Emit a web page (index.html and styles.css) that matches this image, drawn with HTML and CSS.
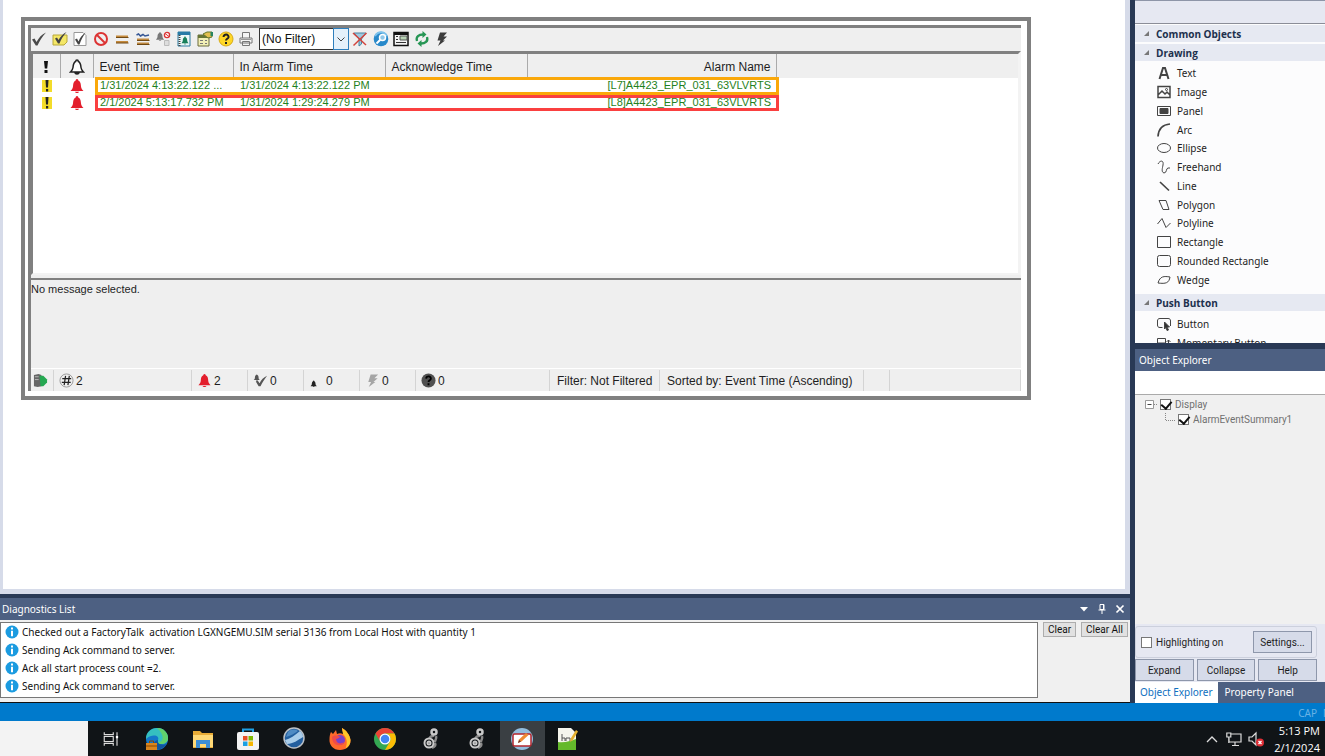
FILE: index.html
```html
<!DOCTYPE html>
<html lang="en">
<head>
    <meta charset="UTF-8">
    <meta name="viewport" content="width=device-width, initial-scale=1.0">
    <title>Alarm Event Summary</title>
    <link rel="stylesheet" href="styles.css">
</head>
<body>
    <svg class="defs" aria-hidden="true">
        <symbol id="bell" viewBox="0 0 16 16">
            <path d="M8 1c-1 0-1.300.8-1.300 1.500C4.300 3.500 4.200 6 4 8.500 3.800 10.500 2.800 11.500 1.500 13h13C13.200 11.500 12.200 10.500 12 8.500 11.800 6 11.700 3.500 9.300 2.500 9.300 1.800 9 1 8 1zM6 13.800h4c-.3 1.600-3.700 1.600-4 0z"/>
        </symbol>
        <symbol id="warn" viewBox="0 0 12 16">
            <path d="M1 2h10v12H1z" fill="#f3dc2a"/>
            <path d="M4.500 2h3L7 9.500H5zM5 11h2.200v2.500H5z" fill="#222"/>
        </symbol>
        <symbol id="info" viewBox="0 0 14 14">
            <circle cx="7" cy="7" r="6.500" fill="#1b9be0"/>
            <path d="M6 2.600h2v1.900H6zM6 5.700h2v5.600H6z" fill="#fff"/>
        </symbol>
        <symbol id="gears" viewBox="0 0 24 24">
            <g fill="none" stroke="#c9c9c9">
                <path d="M15 8.500c-3 1-5 1.500-4 3M17 9c1 3-.5 4-1.500 6M16 16c1 2-1 4-3 5" stroke="#8a8a8a" stroke-width="2.500"/>
                <circle cx="10" cy="16" r="4.500" stroke-width="2"/>
                <circle cx="10" cy="16" r="1.500" stroke-width="2"/>
                <circle cx="15" cy="5" r="2.500" stroke-width="2.500"/>
            </g>
        </symbol>
    </svg>

    <div class="workspace">
        <main class="editor">
            <div class="canvas">
                <section class="alarm">
                    <div class="alarm-inner">
                        <div class="toolbar">
                            <div class="tools">
                                <button aria-label="Acknowledge"><svg viewBox="0 0 16 16"><path d="M1 8.500l2.500-1 2 3.500C8 6.500 10.500 3.500 15 1.500 11 6 8.500 10 6.500 14.500H4.800z" fill="#4a4a4a"/></svg></button>
                                <button aria-label="Acknowledge with comment"><svg viewBox="0 0 16 16"><path d="M1 4h14v7l-3 3H1z" fill="#f4e767" stroke="#b7a83b"/><path d="M3 7.500l2-1 1.500 2.500C8.500 5.500 11 3 14.500 1 11 5 9 8.500 7.500 12.500H6z" fill="#444"/></svg></button>
                                <button aria-label="Acknowledge page"><svg viewBox="0 0 16 16"><path d="M2 1.500h9l3 3v10H2z" fill="#fff" stroke="#999"/><path d="M3 8.500l2-1 1.500 3C8 6.500 10 4 13.500 1.500 11 5.500 9 9 7.500 13.500H6z" fill="#444"/></svg></button>
                                <button aria-label="Suppress"><svg viewBox="0 0 16 16"><circle cx="8" cy="8" r="6" fill="none" stroke="#dc3434" stroke-width="2"/><path d="M4 4l8 8" stroke="#dc3434" stroke-width="2"/></svg></button>
                                <button aria-label="Shelve"><svg viewBox="0 0 16 16"><path d="M2 5.500h12M2 11h12" stroke="#c48a3c" stroke-width="2"/><path d="M2 6.500h12.500M2 12h12.500" stroke="#704914"/></svg></button>
                                <button aria-label="Unshelve"><svg viewBox="0 0 16 16"><path d="M2 8.500h12M2 12.500h12" stroke="#bd873e" stroke-width="2"/><path d="M2 9.500h12.500M2 13.500h12.500" stroke="#704914"/><path d="M1.500 4l2-1L5.500 5 8 3.500l2 1.500 4-1" fill="none" stroke="#365795" stroke-width="1.500"/></svg></button>
                                <button aria-label="Disable alarm"><svg viewBox="0 0 16 16"><use href="#bell" x="0" y="0" width="10" height="11" fill="#777"/><circle cx="12" cy="4" r="2.600" fill="#fff" stroke="#d33" stroke-width="1.300"/><path d="M10 2.500l4 3" stroke="#d33"/><path d="M9.500 9.500H14v5H9.500z" fill="#ddd" stroke="#bbb"/></svg></button>
                                <button aria-label="Alarm display"><svg viewBox="0 0 16 16"><path d="M2 1h12v14H2z" fill="#edf7f8" stroke="#2b7ba0"/><path d="M2 1h12v3H2z" fill="#287ba7"/><path d="M3.500 4v11" stroke="#444" stroke-width="2" stroke-dasharray="1 1"/><use href="#bell" x="4.500" y="4.500" width="9" height="10" fill="#18805b"/></svg></button>
                                <button aria-label="Properties"><svg viewBox="0 0 16 16"><path d="M1 4h11v11H1z" fill="#f2efb6" stroke="#6a6a3a"/><path d="M1 4h11v3H1z" fill="#667536"/><path d="M3 9.500h3M3 12.500h3M8 9.500h2M8 12.500h2" stroke="#777"/><path d="M6 3l4-2h5v5l-4 1z" fill="#e3bf4e" stroke="#66782b"/><path d="M13.500 1H16v4h-2.500z" fill="#278563"/></svg></button>
                                <button aria-label="Help"><svg viewBox="0 0 16 16"><circle cx="8" cy="8" r="7" fill="#ffd726" stroke="#d6aa18"/><path d="M5.500 6c.2-3.500 5.500-3 5 .2C10.200 7.700 8 8 8 9.500M8 11v2" fill="none" stroke="#222" stroke-width="2"/></svg></button>
                                <button aria-label="Print"><svg viewBox="0 0 16 16"><path d="M4.500 7V1.500h7V7M2 7h12v5H2zM4.500 10.500h7v4h-7z" fill="#f5f5f5" stroke="#777"/><path d="M3 8.500h10" stroke="#999"/></svg></button>
                            </div>
                            <div class="filter">
                                <select aria-label="Filter"><option>(No Filter)</option></select>
                                <svg viewBox="0 0 14 20" aria-hidden="true"><path d="M3.500 8.500L7 12l3.500-3.500" fill="none" stroke="#444"/></svg>
                            </div>
                            <div class="tools tools-end">
                                <button aria-label="Clear filter"><svg viewBox="0 0 16 16"><path d="M2 2h12L9.500 8v5L7 15V8z" fill="#9cc9df" stroke="#4884a2"/><path d="M1 2l13 12M14.500 2L1.500 14.500" stroke="#d2443c" stroke-width="1.500"/></svg></button>
                                <button aria-label="Search"><svg viewBox="0 0 16 16"><circle cx="8" cy="8" r="7.300" fill="#2889ca"/><path d="M2 5c3-5 9-5 12 0" fill="none" stroke="#7dc2ec" stroke-width="2"/><circle cx="9.500" cy="6.500" r="3" fill="#8fc7e9" stroke="#fff" stroke-width="1.500"/><path d="M7.300 8.700L3.500 12.500" stroke="#fff" stroke-width="2"/></svg></button>
                                <button aria-label="Details"><svg viewBox="0 0 16 16"><path d="M1 1.500h14v13H1z" fill="#f5f5f5" stroke="#111" stroke-width="1.500"/><path d="M1 3h14" stroke="#111" stroke-width="2"/><path d="M3 5.500h2M3 8.500h2M3 11.500h10" stroke="#333"/><path d="M7 5h7v4H7z" fill="#b8d3b4" stroke="#555"/></svg></button>
                                <button aria-label="Refresh"><svg viewBox="0 0 16 16"><path d="M3 10C1.500 5.500 5 3.500 9 3.500M13 6c1.500 4.500-2 6.500-6 6.500" fill="none" stroke="#269654" stroke-width="2.300"/><path d="M8.500 0l4 3.500-4 3.500zM7.500 9l-4 3.500 4 3.500z" fill="#269654"/></svg></button>
                                <button aria-label="Run"><svg viewBox="0 0 16 16"><path d="M6 1.500h7L9.500 5.500h3.500L9 9.500h2L4 15l2.500-5.500H3.500z" fill="#3c3c3c"/></svg></button>
                            </div>
                        </div>

                        <div class="alarm-list">
                            <table>
                                <colgroup>
                                    <col class="c-priority"><col class="c-state"><col class="c-event"><col class="c-in"><col class="c-ack"><col class="c-name"><col>
                                </colgroup>
                                <thead>
                                    <tr>
                                        <th><svg viewBox="0 0 12 16" role="img" aria-label="Priority"><path d="M4 2h4l-.8 7.500H4.800zM4.500 11h3v3h-3z" fill="#111"/></svg></th>
                                        <th><svg viewBox="0 0 16 16" role="img" aria-label="State"><use href="#bell" fill="#fff" stroke="#222" stroke-width="1.500"/></svg></th>
                                        <th>Event Time</th>
                                        <th>In Alarm Time</th>
                                        <th>Acknowledge Time</th>
                                        <th class="right">Alarm Name</th>
                                        <th></th>
                                    </tr>
                                </thead>
                                <tbody>
                                    <tr>
                                        <td><svg viewBox="0 0 12 16"><use href="#warn"/></svg></td>
                                        <td><svg viewBox="0 0 16 16"><use href="#bell" fill="#e31e2c"/></svg></td>
                                        <td>1/31/2024 4:13:22.122 ...</td>
                                        <td>1/31/2024 4:13:22.122 PM</td>
                                        <td></td>
                                        <td class="right">[L7]A4423_EPR_031_63VLVRTS</td>
                                        <td></td>
                                    </tr>
                                    <tr>
                                        <td><svg viewBox="0 0 12 16"><use href="#warn"/></svg></td>
                                        <td><svg viewBox="0 0 16 16"><use href="#bell" fill="#e31e2c"/></svg></td>
                                        <td>2/1/2024 5:13:17.732 PM</td>
                                        <td>1/31/2024 1:29:24.279 PM</td>
                                        <td></td>
                                        <td class="right">[L8]A4423_EPR_031_63VLVRTS</td>
                                        <td></td>
                                    </tr>
                                </tbody>
                            </table>
                            <div class="marks">
                                <div class="mark mark-orange"></div>
                                <div class="mark mark-red"></div>
                            </div>
                        </div>

                        <div class="message">No message selected.</div>

                        <div class="alarm-status">
                            <span class="s-conn"><svg viewBox="0 0 16 16"><path d="M1 2l5-1 3 1v12l-4 1-4-1z" fill="#666"/><path d="M2 4h4M2 7h4" stroke="#bbb"/><path d="M7 3h4l4 4v3l-4 4H8z" fill="#26a852"/></svg></span>
                            <span class="s-total"><svg viewBox="0 0 16 16"><circle cx="8" cy="8" r="7" fill="#eee" stroke="#999"/><path d="M7 3L5.500 13M11 3L9.500 13M3.500 6h9.500M3 10h9.500" stroke="#222" stroke-width="1.300"/></svg>2</span>
                            <span><svg viewBox="0 0 16 16"><use href="#bell" fill="#e31e2c"/></svg>2</span>
                            <span><svg viewBox="0 0 16 16"><use href="#bell" width="8" height="10" fill="#555"/><path d="M3 9l2-1 2 3c2-4 4-6 8-8-3 4-5 7-7 11H6z" fill="#555"/></svg>0</span>
                            <span><svg viewBox="0 0 16 16"><use href="#bell" x="1" y="7" width="8" height="9" fill="#222"/></svg>0</span>
                            <span><svg viewBox="0 0 16 16"><path d="M6 1.500h8L10 5.500h3.500L9 9.500h2L4 15l2.500-5.500H3.500z" fill="#a5a5a5"/></svg>0</span>
                            <span class="s-unknown"><svg viewBox="0 0 16 16"><circle cx="8" cy="8" r="7.500" fill="#505050"/><path d="M5.500 6c.2-3.500 5.500-3 5 .2C10.200 7.700 8 8 8 9.500M8 11v2" fill="none" stroke="#000" stroke-width="2"/></svg>0</span>
                            <span class="s-filter">Filter: Not Filtered</span>
                            <span class="s-sort">Sorted by: Event Time (Ascending)</span>
                            <span class="s-blank"></span>
                            <span class="s-rest"></span>
                        </div>
                    </div>
                </section>
            </div>

            <section class="diagnostics">
                <header class="panel-title">
                    <h2>Diagnostics List</h2>
                    <button aria-label="Window position"><svg viewBox="0 0 12 12"><path d="M2 4h8L6 8.500z" fill="#fff"/></svg></button>
                    <button aria-label="Auto hide"><svg viewBox="0 0 12 12"><path d="M4 1.500h4v5H4zM2.500 7h7M6 7v4M7.500 2v5" fill="none" stroke="#fff"/></svg></button>
                    <button aria-label="Close"><svg viewBox="0 0 12 12"><path d="M2.500 2.500l7 7M9.500 2.500l-7 7" stroke="#fff" stroke-width="1.700"/></svg></button>
                </header>
                <div class="diagnostics-body">
                    <ul>
                        <li><svg><use href="#info"/></svg>Checked out a FactoryTalk&nbsp; activation LGXNGEMU.SIM serial 3136 from Local Host with quantity 1</li>
                        <li><svg><use href="#info"/></svg>Sending Ack command to server.</li>
                        <li><svg><use href="#info"/></svg>Ack all start process count =2.</li>
                        <li><svg><use href="#info"/></svg>Sending Ack command to server.</li>
                        <li><svg><use href="#info"/></svg></li>
                    </ul>
                    <div class="diagnostics-actions">
                        <button>Clear</button>
                        <button>Clear All</button>
                    </div>
                </div>
            </section>
        </main>

        <aside class="side">
            <section class="toolbox">
                <div class="toolbox-top"></div>
                <h3><svg viewBox="0 0 6 6"><path d="M6 0v6H0z"/></svg>Common Objects</h3>
                <h3><svg viewBox="0 0 6 6"><path d="M6 0v6H0z"/></svg>Drawing</h3>
                <ul class="drawing">
                    <li><svg viewBox="0 0 16 16"><path d="M3.500 14L7 3h2l3.500 11M5 10h6" stroke-width="2"/></svg>Text</li>
                    <li><svg viewBox="0 0 16 16"><path d="M2 2.500h12v11H2zM2 11l4-4 3 3 2-2 3 3" stroke-width="1.500"/><circle cx="10.500" cy="5.500" r="1"/></svg>Image</li>
                    <li><svg viewBox="0 0 16 16"><path d="M1.500 3.500h13v9h-13z"/><path d="M4 5.500h8v5H4z" fill="#444"/></svg>Panel</li>
                    <li><svg viewBox="0 0 16 16"><path d="M2 14.500C2.500 7 7 2.500 14 2" stroke-width="1.700"/></svg>Arc</li>
                    <li><svg viewBox="0 0 16 16"><ellipse cx="8" cy="8" rx="6.500" ry="4.500"/></svg>Ellipse</li>
                    <li><svg viewBox="0 0 16 16"><path d="M2 5C4 1 8 1 7 6c-.5 3-2 7 1 8 3 0 2-5 4-5h2"/></svg>Freehand</li>
                    <li><svg viewBox="0 0 16 16"><path d="M4 4l9 8.500" stroke-width="1.700"/></svg>Line</li>
                    <li><svg viewBox="0 0 16 16"><path d="M3 3.500h7l3 9H7z"/></svg>Polygon</li>
                    <li><svg viewBox="0 0 16 16"><path d="M1.500 9L6 3.500l4 9L14.500 8"/></svg>Polyline</li>
                    <li><svg viewBox="0 0 16 16"><path d="M1.500 2.500h13v11h-13z"/></svg>Rectangle</li>
                    <li><svg viewBox="0 0 16 16"><rect x="1.500" y="2.500" width="13" height="11" rx="2"/></svg>Rounded Rectangle</li>
                    <li><svg viewBox="0 0 16 16"><path d="M2 11c2-7 6-7 12-6-1 6-4 7-12 6z"/></svg>Wedge</li>
                </ul>
                <h3><svg viewBox="0 0 6 6"><path d="M6 0v6H0z"/></svg>Push Button</h3>
                <ul class="buttons">
                    <li><svg viewBox="0 0 16 16"><path d="M6.500 11.500H4c-2 0-2.500-1-2.500-2.500V5c0-1.500.5-2.500 2.500-2.500h8c2 0 2.500 1 2.500 2.500v5"/><path d="M8.500 6l5 5h-2.500l1.500 3-1.500.5-1-3-1.500 1.500z" fill="#333"/></svg>Button</li>
                    <li><svg viewBox="0 0 16 16"><path d="M1.500 3.500h8v9h-8zM1.500 8h8M12.500 5v8M10.500 7l2-2 2 2"/></svg>Momentary Button</li>
                </ul>
            </section>

            <section class="explorer">
                <header class="panel-title"><h2>Object Explorer</h2></header>
                <input class="search" type="text" aria-label="Search objects">
                <div class="tree">
                    <div class="node">
                        <svg class="expander" viewBox="0 0 12 10" aria-hidden="true"><path d="M.5.5h8v8h-8z" fill="#fff" stroke="#999"/><path d="M2.500 4.500h4" stroke="#444"/><path d="M9 4.500h3" stroke="#888" stroke-dasharray="1 1"/></svg>
                        <label><input type="checkbox" checked>Display</label>
                    </div>
                    <div class="node child">
                        <svg class="branch" viewBox="0 0 10 14" aria-hidden="true"><path d="M.5 0v7.500H10" fill="none" stroke="#888" stroke-dasharray="1 1"/></svg>
                        <label><input type="checkbox" checked>AlarmEventSummary1</label>
                    </div>
                </div>
                <div class="highlighting">
                    <label><input type="checkbox">Highlighting on</label>
                    <button>Settings...</button>
                </div>
                <div class="explorer-actions">
                    <button>Expand</button>
                    <button>Collapse</button>
                    <button>Help</button>
                </div>
                <nav class="tabs">
                    <a class="active" href="#">Object Explorer</a>
                    <a href="#">Property Panel</a>
                </nav>
            </section>
        </aside>
    </div>

    <div class="statusbar"><span>CAP</span><span class="num">NUM</span></div>

    <footer class="taskbar">
        <div class="taskbar-search"></div>
        <button class="task-view" aria-label="Task view"><svg viewBox="0 0 24 24"><path d="M3 8.500h12v7H3zM3 3v3h12V3M3 21v-3h12v3M20 3v18" fill="none" stroke="#ddd" stroke-width="1.500"/><path d="M18.500 8h3v3h-3z" fill="#fff"/></svg></button>
        <div class="apps">
            <button aria-label="Edge"><svg viewBox="0 0 24 24"><circle cx="12" cy="12" r="11" fill="#1477c9"/><path d="M1 12C1 5 6 1 12 1c7 0 11 5 11 10 0 4-3 6-7 6-3 0-4-2-3-4 2-4-5-7-12-1z" fill="#35bfc0"/><path d="M12 1c7 0 11 5 11 10 0 4-3 6-7 6-2 0-3-.5-3.300-1.500C20 15 19 7 12 1z" fill="#61d16d"/><path d="M13 13c-1 3 2 6 9 4-3 4-7 6-11 5-4-3-3-8 2-9z" fill="#11559e"/><path d="M1 16h11v7H1z" fill="#d9851e"/><path d="M1 19h11M4.500 16v-2h4v2" fill="none" stroke="#894700"/></svg></button>
            <button aria-label="File Explorer"><svg viewBox="0 0 24 24"><path d="M2 4h7l2 2h11v15H2z" fill="#e9ac37"/><path d="M2 8h20v12H2z" fill="#ffd977"/><path d="M5 21v-8h14v8h-4v-4H9v4z" fill="#3c8ed6"/></svg></button>
            <button aria-label="Store"><svg viewBox="0 0 24 24"><path d="M7 6V2.500h10V6" fill="none" stroke="#1fa0e3" stroke-width="2"/><rect x="1" y="5" width="22" height="18" rx="2" fill="#f3f3f3"/><path d="M7 9h4.500v4.500H7z" fill="#e84f25"/><path d="M12.500 9H17v4.500h-4.500z" fill="#7eb900"/><path d="M7 14.500h4.500V19H7z" fill="#1ba0e2"/><path d="M12.500 14.500H17V19h-4.500z" fill="#f6b600"/></svg></button>
            <button aria-label="Browser"><svg viewBox="0 0 24 24"><circle cx="12" cy="11" r="10" fill="#235f9f" stroke="#bbc1c7" stroke-width="1.500"/><path d="M3 13C8 12 13 8 18 4c2 2 3 4 3 6-5 3-10 7-16 7z" fill="#a9cdea"/><path d="M6 5c3-3 7-3 10-1-4 3-8 5-12 6z" fill="#4f8bc3"/></svg></button>
            <button aria-label="Firefox"><svg viewBox="0 0 24 24"><path d="M3 5l2 2 3-4 1 4c2-1 4-1 6 0 0-2-1-4-1-6 4 2 8 7 8.500 12C23 19 18 23 12 23 5 23 1 18 1.500 12 1.500 9 2 7 3 5z" fill="#ff6a2b"/><path d="M14 1c4 2 8 7 8.500 12 0 4-2 7-5 8.500 2-5 2-10-2.500-14.500 0-2-1-4-1-6z" fill="#ffc62a"/><circle cx="12" cy="13" r="5" fill="#7941c8"/><path d="M4 10c3-3 6-1 9 0-2 0-3 2-5 2 0 4 4 6 8 3-1 5-12 5-12-5z" fill="#f04b49"/></svg></button>
            <button aria-label="Chrome"><svg viewBox="0 0 24 24"><circle cx="12" cy="12" r="11" fill="#34a853"/><path d="M2.500 6.500A11 11 0 0 1 21.500 6.500H12A5.500 5.500 0 0 0 7.200 14.700z" fill="#ea4335"/><path d="M21.500 6.500A11 11 0 0 1 12 23l4.800-8.300A5.500 5.500 0 0 0 12 6.500z" fill="#fbbc05"/><circle cx="12" cy="12" r="5.500" fill="#fff"/><circle cx="12" cy="12" r="4.300" fill="#4285f4"/></svg></button>
            <button aria-label="FactoryTalk Studio"><svg><use href="#gears"/></svg></button>
            <button aria-label="FactoryTalk Client"><svg><use href="#gears"/></svg></button>
            <button class="active" aria-label="Display Editor"><svg viewBox="0 0 24 24"><circle cx="12" cy="12" r="11" fill="#93bddd"/><rect x="3" y="7" width="18" height="12" rx="1.500" fill="#fff" stroke="#b4262c" stroke-width="1.500"/><path d="M8 16l1-3.500L16 6l2.500 2-7 6.500z" fill="#ee8a32"/><path d="M8 16l1-3 2 1.500z" fill="#633"/></svg></button>
            <button aria-label="Report Editor"><svg viewBox="0 0 24 24"><path d="M2 1h13l5 5v17H2z" fill="#f5f5ed"/><path d="M2 15c7 1 12-1 18-3v11H2z" fill="#64b92b"/><path d="M6 7v7M6 11h3v3M10 14v-3h4v3" fill="none" stroke="#555"/><path d="M14 15l1-4L20 3l2 1.500-5 8.500z" fill="#e4b02f"/></svg></button>
        </div>
        <div class="tray">
            <button aria-label="Show hidden icons"><svg viewBox="0 0 16 16"><path d="M3 11l5-5 5 5" fill="none" stroke="#ddd" stroke-width="1.300"/></svg></button>
            <button aria-label="Network"><svg viewBox="0 0 16 16"><path d="M5 3h10v8H3V7M9 11v3M6 14.500h7M.8 2h4v4h-4zM2.800 6v6" fill="none" stroke="#ddd" stroke-width="1.200"/></svg></button>
            <button aria-label="Volume"><svg viewBox="0 0 16 16"><path d="M1 6h3l4-4v12l-4-4H1z" fill="none" stroke="#ddd" stroke-width="1.200"/><circle cx="12" cy="11.500" r="4" fill="#de2f36"/><path d="M10.500 10l3 3M13.500 10l-3 3" stroke="#fff" stroke-width="1.300"/></svg></button>
            <time datetime="2024-02-01T17:13">5:13 PM<br>2/1/2024</time>
        </div>
    </footer>
</body>
</html>
```
FILE: styles.css
```css
* {
    box-sizing: border-box;
}
body {
    margin: 0;
    height: 100vh;
    display: flex;
    flex-direction: column;
    overflow: hidden;
    font-family: "Noto Sans", "Open Sans", sans-serif;
    font-size: 10px;
    color: #1e1e1e;
    background: #293955;
}
ul {
    list-style: none;
    margin: 0;
    padding: 0;
}
h2, h3 {
    margin: 0;
    font-size: 10px;
    font-weight: 400;
}
button {
    padding: 0;
    border: none;
    background: none;
    font: inherit;
    color: inherit;
}
svg {
    display: block;
    flex: none;
}
.defs {
    position: absolute;
    width: 0;
    height: 0;
}
.workspace {
    flex: 1;
    min-height: 0;
    display: flex;
    gap: 5px;
}

/* Editor */
.editor {
    flex: 1;
    min-width: 0;
    display: flex;
    flex-direction: column;
    gap: 4px;
}
.canvas {
    flex: 1;
    min-height: 0;
    padding: 17px 94px 0 18px;
    background: #fff;
    border: solid #d6dbe9;
    border-width: 0 5px 5px 3px;
}
.alarm {
    border: 4px solid #808080;
    padding: 4px 6px 5px 3px;
    font-family: "Liberation Sans", Arial, sans-serif;
    font-size: 12px;
}
.alarm-inner {
    background: #efefef;
    border-top: 3px solid #808080;
    border-left: 3px solid #808080;
}
.toolbar {
    height: 23px;
    display: flex;
    align-items: flex-start;
}
.tools {
    display: flex;
    width: 228px;
    height: 22px;
}
.tools-end {
    width: 106px;
    padding-left: 3px;
}
.tools button {
    flex: 1;
    display: flex;
    align-items: center;
}
.tools svg {
    width: 16px;
    height: 16px;
}
.filter {
    position: relative;
    width: 90px;
    height: 22px;
}
.filter select {
    appearance: none;
    width: 100%;
    height: 100%;
    padding: 0 2px;
    border: 1px solid #333;
    border-radius: 0;
    background: #fff;
    font: inherit;
    color: #111;
}
.filter svg {
    position: absolute;
    top: 0;
    right: 0;
    width: 16px;
    height: 22px;
    background: #e5f1fb;
    border: 1px solid #2f7fbd;
    pointer-events: none;
}
.alarm-list {
    position: relative;
    height: 224px;
    background: #fff;
    border-top: 3px solid #808080;
    border-left: 2px solid #808080;
    border-right: 3px solid #f3f3f3;
    border-bottom: 2px solid #f3f3f3;
}
.alarm-list table {
    width: 100%;
    table-layout: fixed;
    border-collapse: collapse;
}
.c-priority {
    width: 27px;
}
.c-state {
    width: 33px;
}
.c-event {
    width: 140px;
}
.c-in {
    width: 152px;
}
.c-ack {
    width: 142px;
}
.c-name {
    width: 249px;
}
.alarm-list th {
    height: 24px;
    padding: 2px 5px 0 6px;
    background: #efefef;
    border-right: 1px solid #aaa;
    font-weight: 400;
    text-align: left;
    white-space: nowrap;
}
.alarm-list th:last-child {
    border-right: none;
}
.alarm-list td {
    height: 17px;
    padding: 0 5px 0 7px;
    font-size: 11px;
    line-height: 15px;
    vertical-align: top;
    color: #1f8120;
    white-space: nowrap;
}
.alarm-list th.right, .alarm-list td.right {
    text-align: right;
}
.alarm-list th svg, .alarm-list td svg {
    width: 16px;
    height: 16px;
    margin: 0 auto;
}
.alarm-list th:nth-child(-n+2), .alarm-list td:nth-child(-n+2) {
    padding-left: 0;
    padding-right: 0;
}
.marks {
    position: absolute;
    top: 23px;
    left: 62px;
    width: 684px;
    pointer-events: none;
}
.mark {
    height: 18px;
    border: 3px solid #faa80a;
}
.mark-red {
    height: 16px;
    border-color: #fa4040;
}
.message {
    height: 91px;
    margin-top: 3px;
    padding: 1px 0;
    border-top: 2px solid #808080;
    border-bottom: 1px solid #fff;
    font-size: 11px;
    line-height: 16px;
}
.alarm-status {
    display: flex;
    height: 22px;
    padding-top: 1px;
    overflow: hidden;
}
.alarm-status span {
    width: 56px;
    display: flex;
    align-items: center;
    gap: 2px;
    padding-left: 5px;
    border-right: 1px solid #d4d4d4;
    white-space: nowrap;
}
.alarm-status svg {
    width: 15px;
    height: 15px;
}
.alarm-status .s-conn {
    width: 23px;
    padding-left: 2px;
}
.alarm-status .s-total {
    width: 138px;
}
.alarm-status .s-unknown {
    width: 134px;
}
.alarm-status .s-filter {
    width: 110px;
    padding-left: 7px;
}
.alarm-status .s-sort {
    width: 204px;
    padding-left: 7px;
}
.alarm-status .s-blank {
    width: 26px;
}
.alarm-status .s-rest {
    flex: 1;
}

/* Panels */
.panel-title {
    display: flex;
    align-items: center;
    gap: 6px;
    height: 22px;
    padding: 0 4px 0 2px;
    background: #4d6082;
    color: #fff;
}
.panel-title h2 {
    flex: 1;
}
.panel-title svg {
    width: 12px;
    height: 12px;
}
.diagnostics {
    height: 105px;
    display: flex;
    flex-direction: column;
    border-bottom: 1px solid #111;
    background: #f0f0f0;
}
.diagnostics-body {
    display: flex;
    padding: 2px 2px 0 0;
    color: #111;
}
.diagnostics ul {
    flex: 1;
    height: 76px;
    padding-left: 4px;
    overflow: hidden;
    background: #fff;
    border: 1px solid #777;
}
.diagnostics li {
    height: 18px;
    display: flex;
    align-items: center;
    gap: 3px;
    white-space: nowrap;
}
.diagnostics li svg {
    width: 14px;
    height: 14px;
}
.diagnostics-actions {
    display: flex;
    align-items: flex-start;
    gap: 5px;
    padding-left: 5px;
    font-family: Roboto, sans-serif;
}
.diagnostics-actions button {
    height: 15px;
    padding: 0 4px;
    background: #e1e1e1;
    border: 1px solid #adadad;
    line-height: 13px;
}

/* Side panels */
.side {
    width: 190px;
    display: flex;
    flex-direction: column;
    gap: 6px;
}
.toolbox {
    height: 343px;
    overflow: hidden;
    background: #fcfcfd;
}
.toolbox-top {
    height: 24px;
    background: #e6e8f2;
    border-top: 1px solid #8e95a8;
    border-bottom: 1px solid #8b8d98;
}
.toolbox h3 {
    display: flex;
    align-items: center;
    gap: 7px;
    height: 17px;
    margin: 1px 0 2px;
    padding-left: 9px;
    background: #e6e9f2;
    font-family: "Open Sans", sans-serif;
    font-weight: 700;
    color: #20304d;
}
.toolbox h3 svg {
    width: 5px;
    height: 5px;
    fill: #777;
}
.toolbox ul {
    display: grid;
    padding-left: 21px;
}
.toolbox .drawing {
    height: 226px;
    grid-auto-rows: 1fr;
    padding-top: 1px;
    margin-bottom: 5px;
}
.toolbox .buttons {
    grid-auto-rows: 19px;
    padding-top: 1px;
}
.toolbox li {
    display: flex;
    align-items: center;
    gap: 5px;
    white-space: nowrap;
}
.toolbox li svg {
    width: 16px;
    height: 16px;
    fill: none;
    stroke: #444;
}
.explorer {
    flex: 1;
    min-height: 0;
    display: flex;
    flex-direction: column;
    background: #e6e8f2;
}
.explorer .panel-title {
    padding-left: 4px;
}
.search {
    height: 24px;
    border: none;
    border-bottom: 1px solid #aaa;
    background: #fff;
}
.tree {
    flex: 1;
    padding: 2px 0 0 10px;
    background: #f0f0f0;
    font-family: Roboto, sans-serif;
    color: #707070;
}
.node {
    display: flex;
    align-items: center;
    gap: 3px;
    height: 15px;
}
.node.child {
    padding-left: 20px;
}
.expander {
    width: 12px;
    height: 10px;
}
.branch {
    width: 10px;
    height: 14px;
}
.explorer label {
    display: flex;
    align-items: center;
    gap: 4px;
}
.explorer input[type="checkbox"] {
    appearance: none;
    width: 11px;
    height: 11px;
    margin: 0;
    border: 1px solid #777;
    background: #fff;
}
.explorer input[type="checkbox"]:checked::before {
    content: "";
    display: block;
    width: 5px;
    height: 8px;
    margin: -1px 0 0 2px;
    border: solid #111;
    border-width: 0 2px 2px 0;
    transform: rotate(40deg);
}
.highlighting {
    display: flex;
    align-items: center;
    justify-content: space-between;
    height: 32px;
    margin: 2px 8px 1px 0;
    padding: 0 4px 0 5px;
    border: 1px solid #ccd0dd;
    border-radius: 3px;
    font-family: Roboto, sans-serif;
}
.explorer button {
    height: 22px;
    background: #d6dbe9;
    border: 1px solid #8e97ab;
    font-family: Roboto, sans-serif;
}
.highlighting button {
    width: 59px;
}
.explorer-actions {
    display: grid;
    grid-template-columns: repeat(3, 1fr);
    gap: 3px;
    padding-right: 8px;
    margin-bottom: 1px;
}
.tabs {
    display: flex;
    height: 21px;
    background: #4d6082;
}
.tabs a {
    padding: 0 7px;
    line-height: 20px;
    color: #fff;
    text-decoration: none;
    white-space: nowrap;
}
.tabs .active {
    padding: 0 5px;
    background: #fff;
    color: #0e70c0;
}

/* Bottom bars */
.statusbar {
    display: flex;
    justify-content: flex-end;
    gap: 6px;
    height: 18px;
    background: #007acc;
    line-height: 20px;
    color: #69b2e5;
}
.statusbar .num {
    width: 2px;
}
.taskbar {
    display: flex;
    height: 35px;
    background: #101417;
    color: #fff;
}
.taskbar-search {
    width: 88px;
    background: #f3f3f3;
}
.taskbar button {
    display: flex;
    align-items: center;
    justify-content: center;
}
.task-view {
    width: 46px;
}
.task-view svg {
    width: 18px;
    height: 18px;
}
.apps {
    display: flex;
    width: 457px;
}
.apps button {
    flex: 1;
}
.apps .active {
    background: #3a3f43;
}
.apps svg {
    width: 24px;
    height: 24px;
}
.tray {
    display: flex;
    align-items: center;
    gap: 6px;
    margin-left: auto;
    padding-right: 5px;
}
.tray svg {
    width: 16px;
    height: 16px;
}
.tray time {
    padding-left: 4px;
    font-family: "Open Sans", sans-serif;
    font-size: 11px;
    line-height: 17px;
    text-align: right;
}
```
